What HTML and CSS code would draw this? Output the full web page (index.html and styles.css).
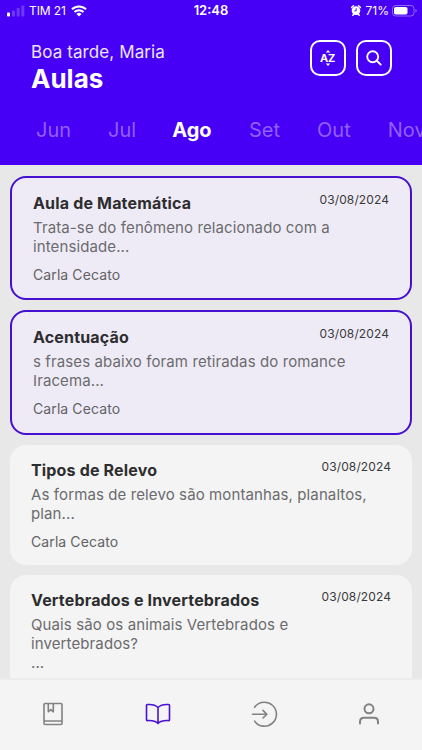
FILE: index.html
```html
<!DOCTYPE html>
<html lang="pt-BR">
<head>
  <meta charset="UTF-8" />
  <title>Aulas</title>
  <meta name="viewport" content="width=device-width, initial-scale=1" />
  <link rel="stylesheet" href="styles.css">
</head>
<body>

<header>
  <div class="status">
    <div class="status-left">
      <svg class="signal" width="18" height="12" viewBox="0 0 18 12" fill="#fff">
        <rect x="0" y="7.5" width="3" height="4" rx="0.8" />
        <rect x="5" y="5.5" width="3" height="6" rx="0.8" opacity="0.22" />
        <rect x="9.7" y="3" width="3" height="8.5" rx="0.8" opacity="0.22" />
        <rect x="14.3" y="0.5" width="3" height="11" rx="0.8" opacity="0.22" />
      </svg>
      <span class="carrier">TIM 21</span>
      <svg class="wifi" width="16" height="12" viewBox="0 0 16 12" fill="none" stroke="#fff" stroke-width="2.1">
        <path d="M1 4.3a10 10 0 0 1 14 0" />
        <path d="M3.5 7.1a6.4 6.4 0 0 1 9 0" />
        <path d="M8 11.5 5.5 9a3.6 3.6 0 0 1 5 0z" fill="#fff" stroke="none" />
      </svg>
    </div>
    <span class="clock">12:48</span>
    <div class="status-right">
      <svg class="alarm" width="10" height="11" viewBox="0 0 10 11">
        <path d="M0.5 2.5 2.5 0.8M9.5 2.5 7.5 0.8M1.8 10.3l1-1M8.2 10.3l-1-1" stroke="#fff" stroke-width="1.5" stroke-linecap="round" />
        <circle cx="5" cy="5.6" r="4.3" fill="#fff" />
        <path d="M5.2 3.2v2.6H3.3" fill="none" stroke="#4700f5" stroke-width="0.9" />
      </svg>
      <span class="percent">71%</span>
      <svg class="battery" width="25" height="12" viewBox="0 0 25 12">
        <rect x="0.5" y="0.5" width="21.5" height="10.5" rx="3.2" fill="none" stroke="#fff" stroke-opacity="0.4" />
        <rect x="2" y="2" width="13.5" height="7.5" rx="1.8" fill="#fff" />
        <path d="M23.5 4v3.6q1.2-.5 1.2-1.8T23.5 4z" fill="#fff" opacity="0.45" />
      </svg>
    </div>
  </div>

  <div class="top">
    <div class="greeting">
      <p>Boa tarde, Maria</p>
      <h1>Aulas</h1>
    </div>
    <div class="actions">
      <button aria-label="Ordenar">
        <span class="sort">AZ</span>
        <svg class="sort-arrows" width="6" height="18" viewBox="0 0 6 18" fill="#fff">
          <path d="M3 1 5.3 3.5H.7zM3 17 .7 14.5h4.6z" />
        </svg>
      </button>
      <button aria-label="Buscar">
        <svg width="18" height="18" viewBox="0 0 18 18" fill="none" stroke="#fff" stroke-width="1.9" stroke-linecap="round">
          <circle cx="7.7" cy="7.7" r="5.5" />
          <path d="m11.8 11.8 3.9 3.8" />
        </svg>
      </button>
    </div>
  </div>

  <nav class="months">
    <span>Jun</span>
    <span>Jul</span>
    <span class="active">Ago</span>
    <span>Set</span>
    <span>Out</span>
    <span>Nov</span>
  </nav>
</header>

<main>
  <article class="card selected">
    <div class="card-head">
      <h2>Aula de Matemática</h2>
      <time>03/08/2024</time>
    </div>
    <p class="text">Trata-se do fenômeno relacionado com a<br>intensidade...</p>
    <p class="author">Carla Cecato</p>
  </article>

  <article class="card selected">
    <div class="card-head">
      <h2>Acentuação</h2>
      <time>03/08/2024</time>
    </div>
    <p class="text">s frases abaixo foram retiradas do romance<br>Iracema...</p>
    <p class="author">Carla Cecato</p>
  </article>

  <article class="card">
    <div class="card-head">
      <h2>Tipos de Relevo</h2>
      <time>03/08/2024</time>
    </div>
    <p class="text">As formas de relevo são montanhas, planaltos,<br>plan...</p>
    <p class="author">Carla Cecato</p>
  </article>

  <article class="card last">
    <div class="card-head">
      <h2>Vertebrados e Invertebrados</h2>
      <time>03/08/2024</time>
    </div>
    <p class="text">Quais são os animais Vertebrados e<br>invertebrados?<br>...</p>
  </article>
</main>

<footer class="tabs">
  <a>
    <svg width="28" height="28" viewBox="0 0 28 28" fill="none" stroke="#828284" stroke-width="1.6" stroke-linejoin="round">
      <rect x="5" y="3.5" width="18" height="21" rx="1" />
      <path d="M5 21h18M9.3 3.5v8.3l2.5-2.2 2.5 2.2V3.5" />
    </svg>
  </a>
  <a>
    <svg width="28" height="28" viewBox="0 0 28 28" fill="none" stroke="#4a12d6" stroke-width="1.6" stroke-linejoin="round" stroke-linecap="round">
      <path d="M14 7.5C11.5 4.7 7.5 4.2 3.2 4.5q-.7 0-.7.8v14.5q0 .8.8.8c4.2-.2 8.2.1 10.7 2.9 2.5-2.8 6.5-3.1 10.7-2.9q.8 0 .8-.8V5.3q0-.8-.7-.8C20.5 4.2 16.5 4.7 14 7.5zV23" />
    </svg>
  </a>
  <a>
    <svg width="28" height="28" viewBox="0 0 28 28" fill="none" stroke="#828284" stroke-width="1.6" stroke-linejoin="round" stroke-linecap="round">
      <path d="M4.6 7.3a12 12 0 1 1 0 13.8M2.5 14.2h14.3M13 10.4l3.9 3.8-3.9 3.8" />
    </svg>
  </a>
  <a>
    <svg width="28" height="28" viewBox="0 0 28 28" fill="none" stroke="#828284" stroke-width="2" stroke-linecap="round">
      <circle cx="14" cy="8.8" r="4.5" />
      <path d="M5 23.6v-1.8q0-4 4-4h10q4 0 4 4v1.8" />
    </svg>
  </a>
</footer>

</body>
</html>
```

FILE: styles.css
```css
* {
  box-sizing: border-box;
}

body {
  font-family: Inter, 'Liberation Sans', sans-serif;
  background: #e8e8e8;
  margin: 0;
  height: 750px;
  display: flex;
  flex-direction: column;
  overflow: hidden;
}

h1, h2, p {
  margin: 0;
}

header {
  background: #4700f5;
  color: white;
  height: 165px;
  flex: none;
  overflow: hidden;
}

.status {
  display: grid;
  grid-template-columns: 1fr auto 1fr;
  align-items: center;
  height: 21px;
  padding: 0 5px 0 7px;
  font-size: 12px;
  line-height: 21px;
}

.status-left, .status-right {
  display: flex;
  align-items: center;
}

.carrier {
  margin: 0 5px 0 4px;
  letter-spacing: -0.1px;
}

.clock {
  font-size: 13px;
  font-weight: 600;
  margin-right: 2px;
}

.status-right {
  justify-content: flex-end;
}

.percent {
  margin: 0 3px 0 5px;
}

.top {
  display: flex;
  justify-content: space-between;
  padding: 19px 31px 0 31px;
}

.greeting p {
  font-size: 17px;
  line-height: 24px;
  letter-spacing: 0.1px;
  opacity: 0.9;
}

.greeting h1 {
  font-size: 26px;
  line-height: 30px;
  font-weight: 700;
}

.actions {
  display: flex;
  gap: 10px;
  margin-right: -0.5px;
}

button {
  position: relative;
  width: 36px;
  height: 36px;
  padding: 0;
  border: 2px solid #fff;
  border-radius: 10px;
  background: none;
  color: white;
  font-family: inherit;
  display: flex;
  align-items: center;
  justify-content: center;
}

.sort {
  font-size: 11px;
  font-weight: 700;
  letter-spacing: -0.3px;
}

.sort-arrows {
  position: absolute;
  left: 13px;
  top: 7px;
}

.months {
  display: flex;
  gap: 37px;
  padding: 23px 0 0 36px;
  font-size: 20px;
  line-height: 26px;
  white-space: nowrap;
}

.months span {
  color: #915fff;
}

.months .active {
  color: white;
  font-weight: 700;
  margin: 0 0.5px 0 -1px;
}

main {
  flex: 1;
  overflow: hidden;
  display: flex;
  flex-direction: column;
  gap: 10px;
  padding: 11px 10px 0;
}

.card {
  flex: none;
  background: #f4f4f4;
  border-radius: 16px;
  padding: 14.3px 21px 14.4px;
}

.card.selected {
  background: #efebf6;
  border: 2px solid #4510d0;
  padding-top: 14px;
  padding-bottom: 14.5px;
}

.card.last {
  flex: 1;
  border-radius: 16px 16px 0 0;
  padding-bottom: 0;
}

.card-head {
  display: flex;
  justify-content: space-between;
}

.card h2 {
  font-size: 16px;
  line-height: 22px;
  letter-spacing: 0.17px;
  font-weight: 700;
  color: #2d2d2f;
}

.card time {
  font-size: 12px;
  line-height: 16px;
  letter-spacing: 0.1px;
  color: #3a3a3c;
}

.text {
  margin-top: 5px;
  font-size: 15px;
  line-height: 18.7px;
  letter-spacing: 0.11px;
  color: #6b6b6e;
}

.author {
  margin-top: 8.4px;
  font-size: 14px;
  line-height: 19px;
  letter-spacing: 0.1px;
  color: #626265;
}

.tabs {
  flex: none;
  height: 72px;
  background: #f4f4f4;
  border-top: 2px solid #ececec;
  display: flex;
  padding-top: 20px;
}

.tabs a {
  flex: 1;
  text-align: center;
}
```
